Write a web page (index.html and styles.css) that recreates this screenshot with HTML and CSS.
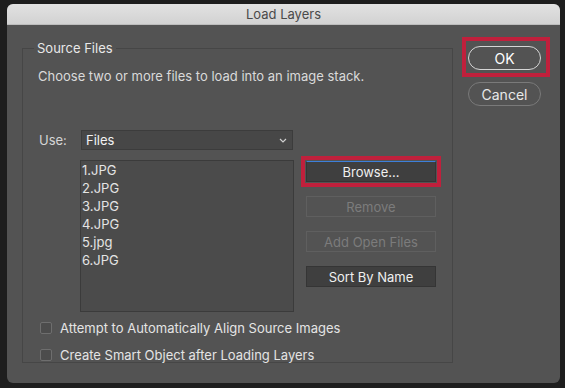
FILE: index.html
```html
<!DOCTYPE html>
<html lang="en">
<head>
    <meta charset="UTF-8">
    <title>Load Layers</title>
    <link rel="stylesheet" href="styles.css">
</head>
<body>
<div class="dialog">
    <div class="titlebar">Load Layers</div>
    <div class="dialog-body">
        <fieldset class="source">
            <legend>Source Files</legend>
            <p class="hint">Choose two or more files to load into an image stack.</p>

            <div class="use-row">
                <label class="use-label">Use:</label>
                <div class="select">
                    <span>Files</span>
                    <svg class="chevron" viewBox="0 0 8 5" width="8" height="5">
                        <path d="M1 1l3 3 3-3" fill="none" stroke="#cfcfcf" stroke-width="1.2"/>
                    </svg>
                </div>
            </div>

            <div class="files-row">
                <ul class="file-list">
                    <li>1.JPG</li>
                    <li>2.JPG</li>
                    <li>3.JPG</li>
                    <li>4.JPG</li>
                    <li>5.jpg</li>
                    <li>6.JPG</li>
                </ul>
                <div class="file-buttons">
                    <button class="btn btn-focus highlight-wide">Browse...</button>
                    <button class="btn" disabled>Remove</button>
                    <button class="btn" disabled>Add Open Files</button>
                    <button class="btn">Sort By Name</button>
                </div>
            </div>

            <label class="check"><span class="box"></span>Attempt to Automatically Align Source Images</label>
            <label class="check"><span class="box"></span>Create Smart Object after Loading Layers</label>
        </fieldset>

        <div class="actions">
            <div class="highlight">
                <button class="pill pill-default">OK</button>
            </div>
            <button class="pill">Cancel</button>
        </div>
    </div>
</div>
</body>
</html>
```

FILE: styles.css
```css
* {
    box-sizing: border-box;
    margin: 0;
    padding: 0;
}

body {
    background-color: #1e1e1e;
    font-family: 'Inter', 'Liberation Sans', sans-serif;
    font-size: 13px;
    color: #e6e6e6;
    padding: 4px 5px 0 7px;
    height: 388px;
    overflow: hidden;
}

.dialog {
    width: 553px;
    height: 379px;
    background-color: #535353;
    border-radius: 6px;
    overflow: hidden;
}

.titlebar {
    height: 21px;
    line-height: 21px;
    text-align: center;
    color: #4a4a4a;
    background: linear-gradient(#e2e2e2, #d2d2d2);
    border-bottom: 1px solid #bdbdbd;
}

.dialog-body {
    display: flex;
    align-items: flex-start;
    padding: 15px 0 0 15px;
}

.source {
    width: 431px;
    height: 323px;
    border: 1px solid #464646;
    padding: 0 15px;
}

.source legend {
    padding: 0 3px;
    margin-left: -4px;
    line-height: 16px;
    color: #e8e8e8;
}

.hint {
    margin-top: 12px;
    line-height: 16px;
    color: #dadada;
}

.use-row {
    display: flex;
    align-items: center;
    margin-top: 46px;
}

.use-label {
    width: 43px;
    padding-left: 1px;
    color: #d6d6d6;
}

.select {
    width: 212px;
    height: 20px;
    display: flex;
    align-items: center;
    justify-content: space-between;
    padding: 0 5px 0 4px;
    background-color: #474747;
    border: 1px solid #3c3c3c;
    color: #f2f2f2;
}

.chevron {
    display: block;
}

.files-row {
    display: flex;
    align-items: flex-start;
    gap: 12px;
    margin-top: 10px;
    margin-left: 42px;
}

.file-list {
    list-style: none;
    width: 214px;
    height: 152px;
    padding-left: 1px;
    background-color: #4b4b4b;
    border: 1px solid #3b3b3b;
}

.file-list li {
    line-height: 18px;
    color: #e4e4e4;
}

.file-buttons {
    display: flex;
    flex-direction: column;
    gap: 14px;
    padding-top: 1px;
}

.btn {
    width: 130px;
    height: 21px;
    font-family: inherit;
    font-size: 13px;
    color: #f0f0f0;
    background-color: #3f3f3f;
    border: 1px solid #353535;
}

.btn:disabled {
    color: #7c7c7c;
    background-color: transparent;
    border-color: #5f5f5f;
}

.btn-focus {
    border-top-color: #3d7fd9;
}

.highlight-wide {
    outline: 4px solid #c0203c;
    outline-offset: 1px;
}

.check {
    display: flex;
    align-items: center;
    gap: 8px;
    line-height: 16px;
    color: #e4e4e4;
    margin-left: 2px;
}

.files-row + .check {
    margin-top: 8px;
}

.check + .check {
    margin-top: 11px;
}

.box {
    width: 12px;
    height: 12px;
    border: 1px solid #6e6e6e;
    border-radius: 2px;
    background-color: #4c4c4c;
}

.actions {
    display: flex;
    flex-direction: column;
    align-items: flex-start;
    gap: 5px;
    margin-left: 9px;
    margin-top: -3px;
}

.highlight {
    border: 4px solid #c0203c;
    padding: 5px 5px 3px 2px;
}

.actions > .pill {
    margin-left: 6px;
}

.pill {
    display: block;
    width: 73px;
    height: 24px;
    font-family: inherit;
    font-size: 14px;
    color: #e8e8e8;
    background-color: transparent;
    border: 1px solid #7a7a7a;
    border-radius: 12px;
}

.pill-default {
    color: #ffffff;
    border: 1.5px solid #d6d6d6;
}
```
